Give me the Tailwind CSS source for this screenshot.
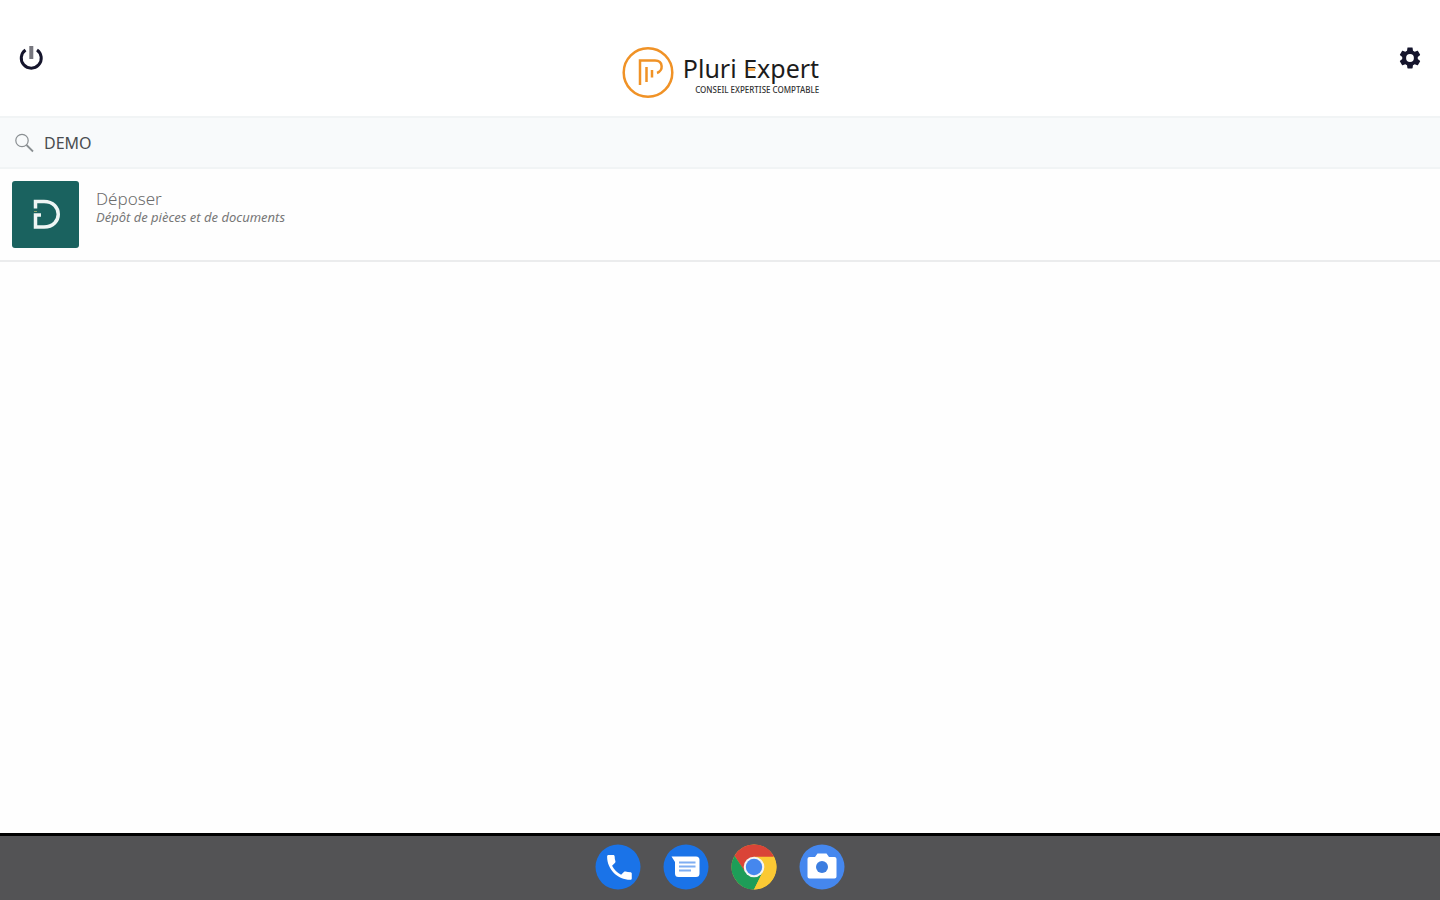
<!DOCTYPE html>
<html lang="fr">
<head>
  <meta charset="UTF-8">
  <meta name="viewport" content="width=device-width, initial-scale=1">
  <title>Pluri Expert</title>
  <script src="https://cdn.jsdelivr.net/npm/@tailwindcss/browser@4"></script>
</head>
<body class="min-h-screen flex flex-col bg-[#fefefe] font-['Noto_Sans',sans-serif]">
  <header class="grid grid-cols-3 items-start px-4 pt-[42px] pb-[17px] bg-white">
    <button type="button" aria-label="Déconnexion" class="w-8 h-8 flex items-center justify-center text-[#15152c]">
      <svg class="w-8 h-8" viewBox="0 0 32 32" fill="none" stroke="currentColor" stroke-width="3">
        <path d="M9.5 8A10 10 0 1 0 21 8"/>
        <path d="M15.3 4v13" stroke="#77777f" stroke-width="4"/>
      </svg>
    </button>

    <div class="flex justify-center pt-1">
      <svg class="w-[53px] h-[53px] shrink-0" viewBox="0 0 53 53" fill="none" stroke="#f09226">
        <circle cx="27" cy="26.500" r="24.300" stroke-width="2.500"/>
        <path d="M19 39V14.500H34C42.500 14.500 42.500 25 36 27" stroke-width="2.500"/>
        <path d="M25.500 21V36M31 24V31.500" stroke-width="2.500"/>
      </svg>
      <div class="ml-[9px] pt-[6px] whitespace-nowrap">
        <p class="text-[25px] leading-8 text-[#1c1c1c]">Pluri <span class="relative">E<span class="absolute left-[5px] top-[17px] w-[7px] h-[3px] bg-[#f5a94f]"></span></span>xpert</p>
        <p class="text-right text-[8px] leading-3 font-medium text-[#333]">CONSEIL EXPERTISE COMPTABLE</p>
      </div>
    </div>

    <button type="button" aria-label="Paramètres" class="justify-self-end w-7 h-8 flex items-center justify-center text-[#15152c]">
      <svg class="w-[26px] h-[26px]" viewBox="0 0 24 24" fill="currentColor">
        <path d="M19.140 12.940c.04-.3.06-.61.06-.94s-.02-.64-.07-.94l2.030-1.580c.18-.14.23-.41.12-.61l-1.920-3.320c-.12-.22-.37-.29-.59-.22l-2.390.96c-.5-.38-1.030-.7-1.620-.94l-.36-2.540c-.04-.24-.24-.41-.48-.41h-3.840c-.24 0-.43.17-.47.41l-.36 2.540c-.59.24-1.130.57-1.620.94l-2.390-.96c-.22-.08-.47 0-.59.22L2.740 8.870c-.12.21-.08.47.12.61l2.030 1.580c-.05.3-.09.63-.09.94s.02.64.07.94l-2.030 1.580c-.18.14-.23.41-.12.61l1.920 3.320c.12.22.37.29.59.22l2.390-.96c.5.38 1.030.7 1.620.94l.36 2.540c.05.24.24.41.48.41h3.840c.24 0 .44-.17.47-.41l.36-2.540c.59-.24 1.130-.56 1.620-.94l2.390.96c.22.08.47 0 .59-.22l1.920-3.320c.12-.22.07-.47-.12-.61l-2.010-1.580zM12 15.600a3.600 3.600 0 1 1 0-7.200 3.600 3.600 0 0 1 0 7.200z"/>
      </svg>
    </button>
  </header>

  <label class="flex items-center h-[53px] px-3 border-y-2 border-[#f1f4f5] bg-[#f8fafb]">
    <svg class="w-6 h-6 shrink-0" viewBox="0 0 24 24" fill="none" stroke="#8a8f92" stroke-width="1.200">
      <circle cx="10" cy="9.500" r="6.200"/>
      <path d="M14.500 14L21 20.500" stroke-width="1.800"/>
    </svg>
    <input type="text" aria-label="Rechercher" value="DEMO" class="ml-2 flex-1 min-w-0 bg-transparent text-base leading-6 text-[#4a4d50] outline-none">
  </label>

  <main class="flex-1">
    <a href="#" class="flex p-3 border-b-2 border-[#ebeced]">
      <svg class="w-[67px] h-[67px] shrink-0 rounded-[3px] bg-[#1a625f]" viewBox="0 0 67 67" fill="none" stroke="#eef5f4" stroke-width="3.500">
        <path d="M23.500 27.500V20.500H32C51 20.500 51 46 32 46H23.500V34H29"/>
        <path d="M22 30.500h3" stroke="#8fa56c" stroke-width="1"/>
      </svg>
      <div class="ml-[17px] pt-2">
        <h2 class="text-[17px] leading-5 font-light text-[#6c6c6c]">Déposer</h2>
        <p class="text-[13px] leading-4 italic text-[#777]">Dépôt de pièces et de documents</p>
      </div>
    </a>
  </main>

  <nav class="flex justify-center gap-[22px] pt-2 pb-[10px] border-t-3 border-black bg-[#535355]">
    <button type="button" aria-label="Téléphone">
      <svg class="w-[46px] h-[46px]" viewBox="0 0 46 46">
        <circle cx="23" cy="23" r="22.500" fill="#1a73e8"/>
        <path transform="translate(8 7) scale(1.370)" fill="#fff" d="M6.620 10.790c1.440 2.830 3.760 5.140 6.590 6.590l2.200-2.200c.27-.27.67-.36 1.020-.24 1.120.37 2.330.57 3.570.57.55 0 1 .45 1 1V20c0 .55-.45 1-1 1-9.390 0-17-7.610-17-17 0-.55.45-1 1-1h3.500c.55 0 1 .45 1 1 0 1.250.2 2.450.57 3.570.11.35.03.74-.25 1.020l-2.200 2.200z"/>
      </svg>
    </button>
    <button type="button" aria-label="Messages">
      <svg class="w-[46px] h-[46px]" viewBox="0 0 46 46">
        <circle cx="23" cy="23" r="22.500" fill="#1a73e8"/>
        <path d="M8.500 12.500H33Q36.500 12.500 36.500 16V29.500Q36.500 33 33 33H15.500Q12 33 12 29.500V18Z" fill="#fff"/>
        <path d="M16 18.500H32.500M16 22.500H32.500M16 26.500H28" stroke="#7faef2" stroke-width="2"/>
      </svg>
    </button>
    <button type="button" aria-label="Chrome">
      <svg class="w-[46px] h-[46px]" viewBox="0 0 46 46">
        <circle cx="23" cy="23" r="22.500" fill="#fbc934"/>
        <path d="M23 23L14 28L3.510 11.750A22.500 22.500 0 0 1 42.490 11.750V13H23Z" fill="#da4437"/>
        <path d="M3.510 11.750A22.500 22.500 0 0 0 23 45.500L31.660 28L23 23L14.340 28Z" fill="#1e9d58"/>
        <path d="M23 12.800H43A22.500 22.500 0 0 1 23 45.500L31.800 28Z" fill="#fbc934"/>
        <circle cx="23" cy="23" r="10.300" fill="#f4f4f4"/>
        <circle cx="23" cy="23" r="8.200" fill="#4587ee"/>
      </svg>
    </button>
    <button type="button" aria-label="Appareil photo">
      <svg class="w-[46px] h-[46px]" viewBox="0 0 46 46">
        <circle cx="23" cy="23" r="22.500" fill="#4587ee"/>
        <path d="M10.500 13H16L18.500 9.500H27.500L30 13H35.500Q37.500 13 37.500 15V32.500Q37.500 34.500 35.500 34.500H10.500Q8.500 34.500 8.500 32.500V15Q8.500 13 10.500 13Z" fill="#fff"/>
        <circle cx="23" cy="23" r="6" fill="#3b7de0"/>
      </svg>
    </button>
  </nav>
</body>
</html>
